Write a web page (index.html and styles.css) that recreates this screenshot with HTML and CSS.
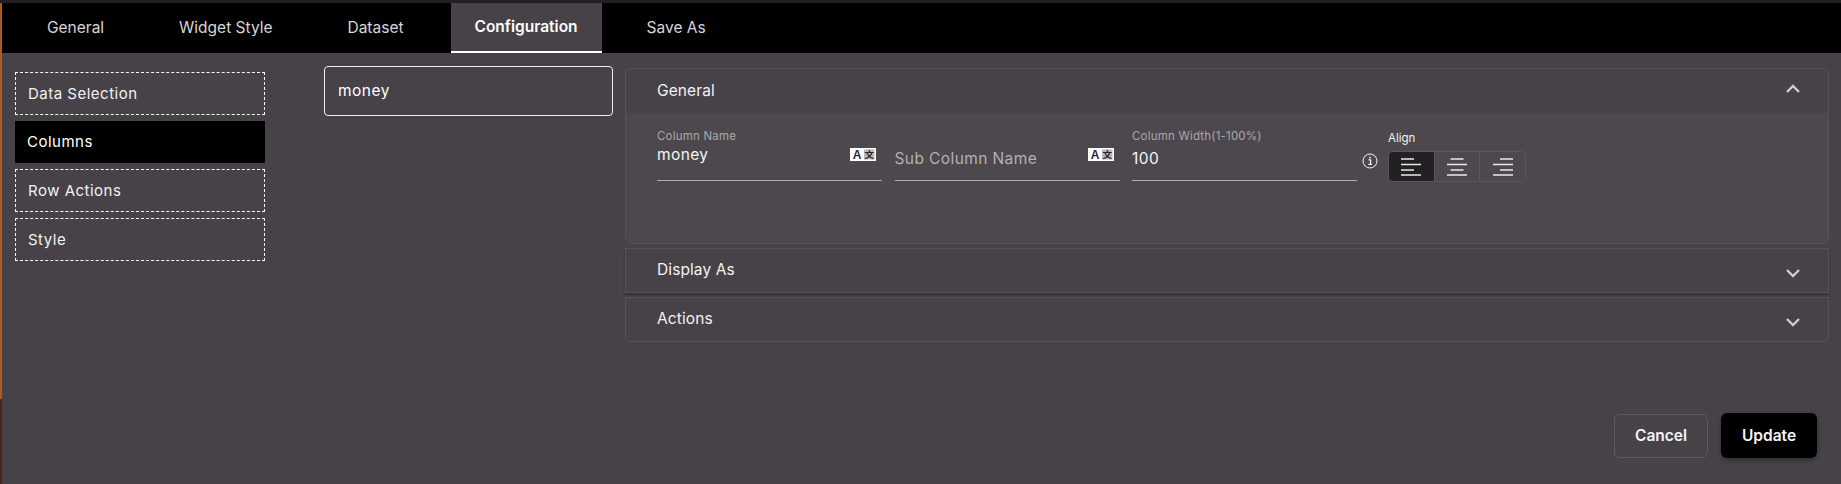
FILE: index.html
```html
<!DOCTYPE html>
<html lang="en">
<head>
    <meta charset="UTF-8">
    <title>Widget Configuration</title>
    <link rel="stylesheet" href="styles.css">
</head>
<body>
    <div class="page">
        <nav class="tabs">
            <a class="tab">General</a>
            <a class="tab">Widget Style</a>
            <a class="tab">Dataset</a>
            <a class="tab active">Configuration</a>
            <a class="tab">Save As</a>
        </nav>

        <main class="content">
            <ul class="side-menu">
                <li class="side-item">Data Selection</li>
                <li class="side-item selected">Columns</li>
                <li class="side-item">Row Actions</li>
                <li class="side-item">Style</li>
            </ul>

            <div class="column-list">
                <div class="column-card">money</div>
            </div>

            <div class="accordion">
                <section class="panel open">
                    <header class="panel-head">
                        <span>General</span>
                        <svg class="chevron up" viewBox="0 0 16 10"><path d="M2 8l6-6 6 6"/></svg>
                    </header>
                    <div class="panel-body">
                        <div class="field">
                            <label class="field-label">Column Name</label>
                            <div class="field-value">money</div>
                            <svg class="translate" viewBox="0 0 26 13">
                                <rect width="26" height="13" fill="#fff"/>
                                <rect x="14" y="1.5" width="10.5" height="10" fill="#b9b7ba"/>
                                <text x="7" y="10.5" class="icon-letter" text-anchor="middle">A</text>
                                <text x="19.2" y="10.2" class="icon-han" text-anchor="middle">文</text>
                            </svg>
                        </div>
                        <div class="field">
                            <div class="field-value placeholder">Sub Column Name</div>
                            <svg class="translate" viewBox="0 0 26 13">
                                <rect width="26" height="13" fill="#fff"/>
                                <rect x="14" y="1.5" width="10.5" height="10" fill="#b9b7ba"/>
                                <text x="7" y="10.5" class="icon-letter" text-anchor="middle">A</text>
                                <text x="19.2" y="10.2" class="icon-han" text-anchor="middle">文</text>
                            </svg>
                        </div>
                        <div class="field">
                            <label class="field-label">Column Width(1-100%)</label>
                            <div class="field-value low">100</div>
                        </div>
                        <svg class="info" width="16" height="16" viewBox="0 0 16 16">
                            <circle cx="8" cy="8" r="7" fill="none" stroke="#f4f3f4" stroke-width="1"/>
                            <rect x="7.3" y="3.8" width="1.5" height="1.6" fill="#f4f3f4"/>
                            <path d="M6.4 6.9h2.2v4.2M6.3 11.4h3.6" fill="none" stroke="#f4f3f4" stroke-width="1.2"/>
                        </svg>
                        <div class="align">
                            <div class="align-label">Align</div>
                            <div class="align-group">
                                <button class="align-btn current">
                                    <svg width="20" height="18" viewBox="0 0 20 18"><path d="M0 1h13M0 6.5h20M0 12h13M0 17h20"/></svg>
                                </button>
                                <button class="align-btn">
                                    <svg width="20" height="18" viewBox="0 0 20 18"><path d="M3.5 1h13M0 6.5h20M3.5 12h13M0 17h20"/></svg>
                                </button>
                                <button class="align-btn">
                                    <svg width="20" height="18" viewBox="0 0 20 18"><path d="M7 1h13M0 6.5h20M7 12h13M0 17h20"/></svg>
                                </button>
                            </div>
                        </div>
                    </div>
                </section>
                <section class="panel middle">
                    <header class="panel-head">
                        <span>Display As</span>
                        <svg class="chevron" viewBox="0 0 16 10"><path d="M2 2l6 6 6-6"/></svg>
                    </header>
                </section>
                <section class="panel last">
                    <header class="panel-head">
                        <span>Actions</span>
                        <svg class="chevron" viewBox="0 0 16 10"><path d="M2 2l6 6 6-6"/></svg>
                    </header>
                </section>
            </div>
        </main>

        <footer class="actions">
            <button class="btn btn-cancel">Cancel</button>
            <button class="btn btn-update">Update</button>
        </footer>
    </div>
</body>
</html>
```

FILE: styles.css
```css
* {
    box-sizing: border-box;
}

html, body {
    height: 100%;
}

body {
    margin: 0;
    overflow: hidden;
    background-color: #221f22;
    font-family: 'Inter', 'Open Sans', sans-serif;
    color: #ffffff;
}

.icon-letter {
    font-family: 'Liberation Sans', sans-serif;
    font-size: 12px;
    font-weight: 700;
    fill: #2b2830;
}

.icon-han {
    font-family: 'Noto Sans CJK SC', sans-serif;
    font-size: 9.5px;
    font-weight: 700;
    fill: #26232a;
}

.page {
    display: flex;
    flex-direction: column;
    height: 484px;
    padding-top: 3px;
    padding-left: 2px;
    background: linear-gradient(#221f22 3px, #a85c20 3px, #a85c20 399px, #4f2317 399px) left top / 2px 100% no-repeat, #221f22;
}

/* top tabs */
.tabs {
    display: flex;
    flex: none;
    gap: 27px;
    height: 50px;
    padding-left: 21px;
    background-color: #000000;
}

.tab {
    display: flex;
    align-items: center;
    justify-content: center;
    padding: 0 24px 1px;
    font-size: 15.5px;
    color: #d8d6d9;
}

.tab.active {
    margin-left: -4px;
    margin-right: -6px;
    padding-bottom: 2px;
    background-color: #464248;
    border-bottom: 2px solid #ffffff;
    font-weight: 600;
    color: #ffffff;
}

/* main area */
.content {
    flex: 1;
    display: flex;
    min-height: 0;
    background-color: #464248;
    padding-left: 13px;
}

.side-menu {
    display: flex;
    flex-direction: column;
    gap: 6px;
    width: 250px;
    margin: 19px 59px 0 0;
    padding: 0;
    list-style: none;
}

.side-item {
    display: flex;
    align-items: center;
    height: 42.67px;
    padding-left: 12px;
    border: 1px dashed #ffffff;
    font-size: 15px;
    letter-spacing: 0.5px;
    color: #f2f1f2;
}

.side-item.selected {
    background-color: #000000;
    border: none;
    color: #ffffff;
}

.column-list {
    width: 289px;
    margin: 13px 12px 0 0;
}

.column-card {
    display: flex;
    align-items: center;
    height: 50px;
    padding: 0 0 2px 13px;
    border: 1px solid #f0eff0;
    border-radius: 4px;
    font-size: 15.5px;
    letter-spacing: 0.5px;
}

/* accordion */
.accordion {
    display: flex;
    flex-direction: column;
    gap: 4px;
    width: 1204px;
    margin-top: 15px;
}

.panel {
    border: 1px solid #57535a;
    border-radius: 6px;
}

.panel.middle {
    border-radius: 0;
    box-shadow: 0 2px 2px rgba(0, 0, 0, 0.25);
}

.panel.last {
    border-radius: 0 0 6px 6px;
}

.panel-head {
    display: flex;
    align-items: center;
    justify-content: space-between;
    height: 43px;
    padding: 0 27px 2px 31px;
    font-size: 15.5px;
    letter-spacing: 0.1px;
    color: #f4f3f4;
}

.panel.open .panel-head {
    height: 44px;
}

.chevron {
    width: 16px;
    height: 10px;
    margin-top: 6px;
}

.chevron.up {
    margin-top: -2px;
}

.chevron path {
    fill: none;
    stroke: #cfcdd0;
    stroke-width: 2.4;
}

.panel-body {
    display: flex;
    align-items: flex-start;
    gap: 12.5px;
    height: 130px;
    padding: 15px 0 0 31px;
    background-color: #4c484e;
    border-radius: 0 0 6px 6px;
}

.field {
    position: relative;
    width: 225px;
    height: 53px;
    border-bottom: 1px solid #aeacb0;
}

.field-label {
    display: block;
    height: 17px;
    font-size: 11.5px;
    line-height: 16px;
    letter-spacing: 0.2px;
    color: #a9a7aa;
}

.field-value {
    font-size: 15.5px;
    line-height: 20px;
    letter-spacing: 0.4px;
    color: #f6f5f6;
}

.field-value.low {
    padding-top: 4px;
}

.field-value.placeholder {
    padding-top: 21px;
    color: #b2b0b3;
}

.translate {
    position: absolute;
    top: 20px;
    right: 6px;
    width: 26px;
    height: 13px;
}

.info {
    flex: none;
    margin: 25px -8px 0 -8px;
}

.align {
    margin-left: 6px;
    margin-top: 3px;
}

.align-label {
    height: 20px;
    font-size: 11.5px;
    line-height: 14px;
    color: #f2f1f2;
}

.align-group {
    display: flex;
    width: 138px;
    height: 31px;
    border: 1px solid #5a565c;
    border-radius: 5px;
    overflow: hidden;
}

.align-btn {
    display: flex;
    align-items: center;
    justify-content: center;
    flex: 1;
    padding: 0;
    background: none;
    border: none;
    border-right: 1px solid #5a565c;
}

.align-btn:last-child {
    border-right: none;
}

.align-btn.current {
    background-color: #222023;
}

.align-btn path {
    fill: none;
    stroke: #e8e7e8;
    stroke-width: 1.5;
}

/* footer buttons */
.actions {
    display: flex;
    flex: none;
    justify-content: flex-end;
    align-items: center;
    gap: 13px;
    padding: 0 24px 26px 0;
    background-color: #464248;
}

.btn {
    height: 45px;
    border-radius: 6px;
    font-family: inherit;
    font-size: 15.5px;
    font-weight: 600;
    color: #f6f5f6;
}

.btn-cancel {
    width: 94px;
    height: 44px;
    background: none;
    border: 1px solid #5f5b61;
}

.btn-update {
    width: 96px;
    background-color: #000000;
    border: none;
    box-shadow: 0 2px 4px rgba(0, 0, 0, 0.3);
}
```
